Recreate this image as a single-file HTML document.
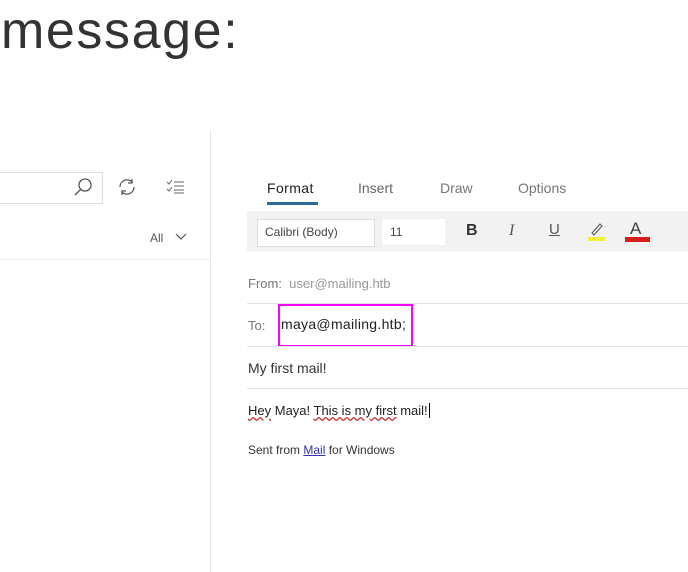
<!DOCTYPE html><html><head><style>
body{margin:0;width:688px;height:572px;background:#fff;position:relative;overflow:hidden;font-family:"Liberation Sans",sans-serif}
.a{position:absolute}
.s{font-size:13px;color:#333}
</style></head><body>
<div class="a" style="left:1px;top:1px;font-size:52px;color:#333;letter-spacing:1.6px">message:</div>
<div class="a" style="left:210px;top:130px;width:1px;height:442px;background:#e6e6e6"></div>
<div class="a" style="left:-2px;top:172px;width:103px;height:30px;border:1px solid #ddd"></div>
<svg class="a" style="left:72px;top:176px" width="22" height="22"><circle cx="13" cy="9" r="6" fill="none" stroke="#555" stroke-width="1.3"/><line x1="9" y1="13" x2="3" y2="19" stroke="#555" stroke-width="1.3"/></svg>
<svg class="a" style="left:116px;top:176px" width="22" height="22"><path d="M4 11a7 7 0 0 1 12-5M18 11a7 7 0 0 1-12 5" fill="none" stroke="#555" stroke-width="1.3"/><path d="M16 3v4h-4M6 19v-4h4" fill="none" stroke="#555" stroke-width="1.3"/></svg>
<svg class="a" style="left:166px;top:178px" width="20" height="18"><path d="M1 4l2 2 3-4M1 11l2 2 3-4" fill="none" stroke="#666"/><path d="M8 4h10M8 8h10M8 12h10M8 15h10" stroke="#666"/></svg>
<div class="a" style="left:150px;top:231px;font-size:12px;color:#555">All</div>
<svg class="a" style="left:175px;top:233px" width="12" height="8"><path d="M1 1l5 5 5-5" fill="none" stroke="#555" stroke-width="1.2"/></svg>
<div class="a" style="left:0;top:259px;width:210px;height:1px;background:#eee"></div>
<div class="a s" style="left:267px;top:180px;font-size:14px;color:#222;letter-spacing:0.4px">Format</div>
<div class="a" style="left:267px;top:202px;width:51px;height:3px;background:#2b6a9b"></div>
<div class="a s" style="left:358px;top:180px;font-size:14px;color:#666">Insert</div>
<div class="a s" style="left:440px;top:180px;font-size:14px;color:#777">Draw</div>
<div class="a s" style="left:518px;top:180px;font-size:14px;color:#777">Options</div>
<div class="a" style="left:247px;top:211px;width:441px;height:40px;background:#f2f2f2"></div>
<div class="a" style="left:257px;top:219px;width:116px;height:26px;background:#fff;border:1px solid #ddd"></div>
<div class="a" style="left:265px;top:225px;font-size:12px;color:#444">Calibri (Body)</div>
<div class="a" style="left:382px;top:219px;width:63px;height:26px;background:#fff"></div>
<div class="a" style="left:390px;top:225px;font-size:12px;color:#444">11</div>
<div class="a" style="left:466px;top:222px;font-size:16px;font-weight:bold;color:#333">B</div>
<div class="a" style="left:509px;top:222px;font-size:16px;font-style:italic;font-family:'Liberation Serif';color:#555">I</div>
<div class="a" style="left:549px;top:221px;font-size:15px;color:#555;text-decoration:underline">U</div>
<svg class="a" style="left:586px;top:219px" width="22" height="24"><path d="M6 14l8-9 2 2-8 9z" fill="none" stroke="#555"/><rect x="2" y="18" width="17" height="4" fill="#f4f03a"/></svg>
<div class="a" style="left:630px;top:219px;font-size:17px;color:#444">A</div>
<div class="a" style="left:625px;top:237px;width:25px;height:5px;background:#d81b1b"></div>
<div class="a s" style="left:248px;top:276px;color:#777">From:&nbsp; <span style="color:#999">user@mailing.htb</span></div>
<div class="a" style="left:247px;top:303px;width:441px;height:1px;background:#e3e3e3"></div>
<div class="a s" style="left:248px;top:318px;color:#777">To:</div>
<div class="a" style="left:278px;top:304px;width:131px;height:39px;border:2px solid #f0f"></div>
<div class="a s" style="left:281px;top:316px;font-size:14px;color:#222;letter-spacing:0.3px">maya@mailing.htb;</div>
<div class="a" style="left:247px;top:346px;width:441px;height:1px;background:#e3e3e3"></div>
<div class="a s" style="left:248px;top:360px;font-size:14px">My first mail!</div>
<div class="a" style="left:247px;top:388px;width:441px;height:1px;background:#e3e3e3"></div>
<div class="a s" style="left:248px;top:403px;color:#222"><span style="text-decoration:underline wavy #c33">Hey</span> Maya! <span style="text-decoration:underline wavy #c33">This is my first</span> mail!<span style="border-left:1.5px solid #000;margin-left:1px"></span></div>
<div class="a s" style="left:248px;top:443px;font-size:12px;color:#333">Sent from <span style="color:#33a;text-decoration:underline">Mail</span> for Windows</div>
</body></html>
